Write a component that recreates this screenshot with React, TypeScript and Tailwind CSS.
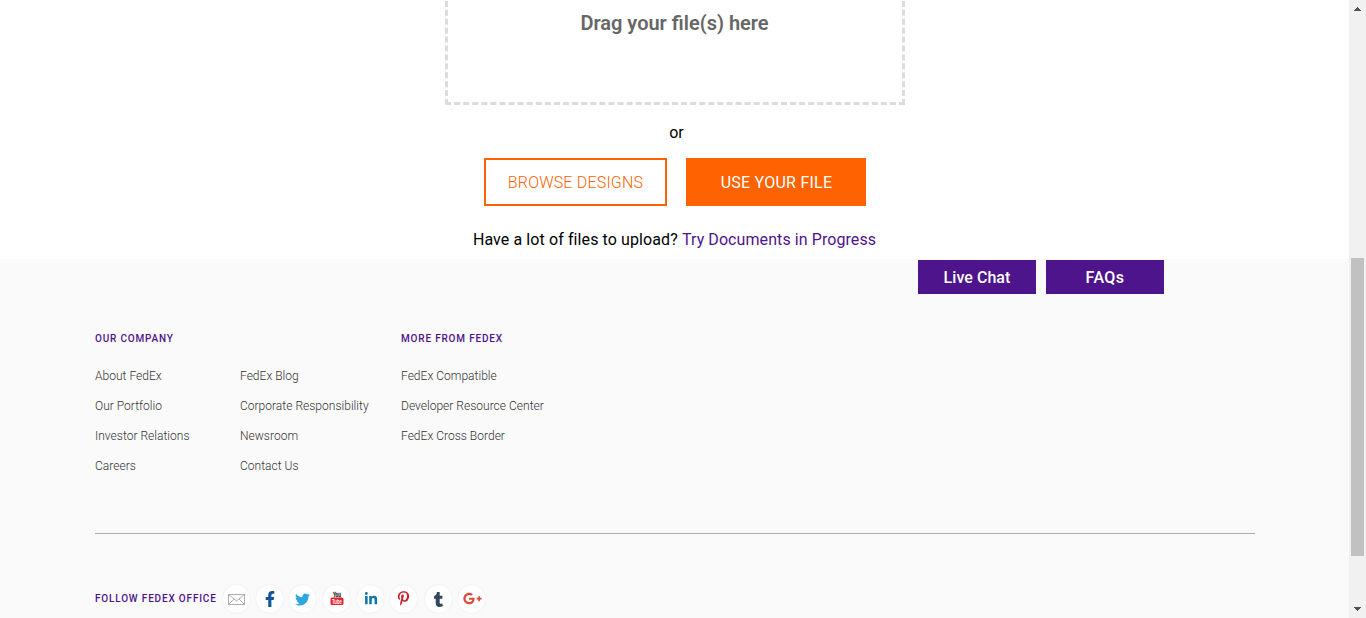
import type { ReactNode } from "react";
import { FaFacebookF, FaTwitter, FaLinkedinIn, FaPinterestP, FaTumblr, FaGooglePlusG } from "react-icons/fa";

const linkColumns = [
  ["About FedEx", "Our Portfolio", "Investor Relations", "Careers"],
  ["FedEx Blog", "Corporate Responsibility", "Newsroom", "Contact Us"],
];
const moreLinks = ["FedEx Compatible", "Developer Resource Center", "FedEx Cross Border"];

function LinkList({ items }: { items: string[] }) {
  return (
    <ul className="text-[12px] leading-[30px] font-light tracking-[0.02px] text-[#333]">
      {items.map((t) => (
        <li key={t} className="whitespace-nowrap">
          <a href="#">{t}</a>
        </li>
      ))}
    </ul>
  );
}

function Heading({ children }: { children: ReactNode }) {
  return (
    <h3 className="text-[10px] leading-[14px] font-medium tracking-[0.82px] whitespace-nowrap text-[#4d148c] uppercase">
      {children}
    </h3>
  );
}

function Circle({ children, className }: { children: ReactNode; className: string }) {
  return (
    <a
      href="#"
      className={`flex h-[30px] w-[29px] shrink-0 items-center justify-center rounded-full border border-[#f2f2f2] bg-[#fefefe] ${className}`}
    >
      {children}
    </a>
  );
}

function MailIcon() {
  return (
    <svg width="17" height="11" viewBox="0 0 17 11" fill="none" stroke="#a6a6a6" strokeWidth="0.9">
      <rect x="0.5" y="0.5" width="16" height="10" />
      <path d="M0.5 0.5 L8.5 7 L16.5 0.5 M0.5 10.5 L6 5 M16.5 10.5 L11 5" />
    </svg>
  );
}

function YouTubeIcon() {
  return (
    <svg width="18" height="20" viewBox="-2 -3 18 20" fontFamily="Liberation Sans, sans-serif" fontWeight="700">
      <text x="3" y="5" fontSize="6.5" fill="#333" stroke="#333" strokeWidth="0.3" textLength="8" lengthAdjust="spacingAndGlyphs">You</text>
      <rect x="0.5" y="5.5" width="13" height="7.5" rx="1.6" fill="#e8202a" />
      <text x="2" y="11.6" fontSize="6.3" fill="#fff" textLength="10" lengthAdjust="spacingAndGlyphs">Tube</text>
    </svg>
  );
}

function Scrollbar() {
  return (
    <div className="flex h-full w-[17px] shrink-0 flex-col items-center bg-[#f1f1f1]">
      <svg width="17" height="17" viewBox="0 0 17 17" shapeRendering="crispEdges" className="shrink-0">
        <path d="M5 11h7v-1h-1v-1h-1v-1h-1v-1h-1v1h-1v1h-1v1h-1z" fill="#505050" />
      </svg>
      <div className="mt-[241px] h-[298px] w-[13px] bg-[#c1c1c1]" />
      <svg width="17" height="17" viewBox="0 0 17 17" shapeRendering="crispEdges" className="mt-auto shrink-0">
        <path d="M5 6h7v1h-1v1h-1v1h-1v1h-1v-1h-1v-1h-1v-1h-1z" fill="#505050" />
      </svg>
    </div>
  );
}

export default function App() {
  return (
    <div className="flex h-[618px] w-[1366px] overflow-hidden bg-white font-['Roboto',sans-serif]">
      <div className="flex min-w-0 flex-1 flex-col">
        <main className="flex h-[259px] shrink-0 flex-col items-center pl-px text-[16px] text-black">
          <div className="-mt-[115px] flex h-[220px] w-[460px] shrink-0 justify-center border-3 border-dashed border-[#dcdcdc] pt-[123px]">
            <h2 className="text-[20px] leading-[24px] font-semibold text-[#666] pr-px">Drag your file(s) here</h2>
          </div>
          <p className="mt-[18px] pl-[3px] leading-[20px]">or</p>
          <div className="mt-[15px] flex gap-[19px]">
            <button className="h-12 w-[183px] border-2 border-[#ff6200] pt-[2px] font-light tracking-[0.19px] text-[#ff6200]">BROWSE DESIGNS</button>
            <button className="h-12 w-[180px] bg-[#ff6200] pt-[2px] pl-px tracking-[0.24px] text-white">USE YOUR FILE</button>
          </div>
          <p className="mt-[24px] pr-px leading-[20px] tracking-[0.1px] whitespace-nowrap">
            Have a lot of files to upload? <a href="#" className="tracking-[0.08px] text-[#4d148c]">Try Documents in Progress</a>
          </p>
        </main>
        <footer className="flex flex-1 flex-col bg-[#fafafa] pt-px pl-[95px]">
          <div className="ml-[823px] flex gap-[10px] text-[16px] font-medium tracking-[0.05px] text-white">
            <button className="h-[34px] w-[118px] bg-[#4d148c] pt-[2px]">Live Chat</button>
            <button className="h-[34px] w-[118px] bg-[#4d148c] pt-[2px] tracking-[0.4px]">FAQs</button>
          </div>
          <div className="mt-[38px] flex h-[201px]">
            <section className="w-[306px]">
              <Heading>Our Company</Heading>
              <div className="mt-[15px] flex">
                <div className="w-[145px]"><LinkList items={linkColumns[0]} /></div>
                <LinkList items={linkColumns[1]} />
              </div>
            </section>
            <section>
              <Heading>More From FedEx</Heading>
              <div className="mt-[15px]"><LinkList items={moreLinks} /></div>
            </section>
          </div>
          <hr className="w-[1160px] border-t border-[#aaa]" />
          <div className="mt-[50px] flex items-center">
            <div className="w-[127px]"><Heading>Follow FedEx Office</Heading></div>
            <Circle className=""><MailIcon /></Circle>
            <Circle className="ml-1"><FaFacebookF size={16} color="#10569b" /></Circle>
            <Circle className="ml-1"><FaTwitter size={15} color="#2ca7e0" /></Circle>
            <Circle className="ml-[5px]"><YouTubeIcon /></Circle>
            <Circle className="ml-[5px]"><FaLinkedinIn size={14} color="#0e76a8" /></Circle>
            <Circle className="ml-1 pb-[2px]"><FaPinterestP size={15} color="#cb2027" /></Circle>
            <Circle className="ml-[6px]"><FaTumblr size={15} color="#32465c" /></Circle>
            <Circle className="ml-1 pb-px pl-px"><FaGooglePlusG size={19} color="#dc4a38" /></Circle>
          </div>
        </footer>
      </div>
      <Scrollbar />
    </div>
  );
}
